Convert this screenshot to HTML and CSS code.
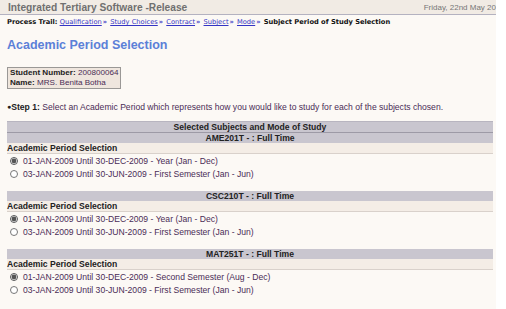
FILE: index.html
```html
<!DOCTYPE html>
<html lang="en">
<head>
  <meta charset="UTF-8" />
  <title>Academic Period Selection | ITS</title>
  <link rel="stylesheet" href="styles.css">
</head>
<body>
  <div class="page">
    <div class="topbar">
      <span class="app-name">Integrated Tertiary Software -Release</span>
      <span class="date">Friday, 22nd May 20</span>
    </div>

    <div class="content">
      <div class="trail">
        <b>Process Trail:</b>
        <a href="#">Qualification</a><span class="sep">&raquo;</span>
        <a href="#">Study Choices</a><span class="sep">&raquo;</span>
        <a href="#">Contract</a><span class="sep">&raquo;</span>
        <a href="#">Subject</a><span class="sep">&raquo;</span>
        <a href="#">Mode</a><span class="sep">&raquo;</span>
        <b>Subject Period of Study Selection</b>
      </div>

      <h1>Academic Period Selection</h1>

      <div class="student">
        <div><b>Student Number:</b> 200800064</div>
        <div><b>Name:</b> MRS. Benita Botha</div>
      </div>

      <p class="step"><span class="dot">&#9679;</span><b>Step 1:</b> Select an Academic Period which represents how you would like to study for each of the subjects chosen.</p>

      <div class="subjects">
        <div class="head-bar">Selected Subjects and Mode of Study</div>

        <div class="subject">
          <div class="subject-bar">AME201T - : Full Time</div>
          <div class="period-label">Academic Period Selection</div>
          <label class="option"><input type="radio" name="ame" checked> 01-JAN-2009 Until 30-DEC-2009 - Year (Jan - Dec)</label>
          <label class="option"><input type="radio" name="ame"> 03-JAN-2009 Until 30-JUN-2009 - First Semester (Jan - Jun)</label>
        </div>

        <div class="subject">
          <div class="subject-bar">CSC210T - : Full Time</div>
          <div class="period-label">Academic Period Selection</div>
          <label class="option"><input type="radio" name="csc" checked> 01-JAN-2009 Until 30-DEC-2009 - Year (Jan - Dec)</label>
          <label class="option"><input type="radio" name="csc"> 03-JAN-2009 Until 30-JUN-2009 - First Semester (Jan - Jun)</label>
        </div>

        <div class="subject">
          <div class="subject-bar">MAT251T - : Full Time</div>
          <div class="period-label">Academic Period Selection</div>
          <label class="option"><input type="radio" name="mat" checked> 01-JAN-2009 Until 30-DEC-2009 - Second Semester (Aug - Dec)</label>
          <label class="option"><input type="radio" name="mat"> 03-JAN-2009 Until 30-JUN-2009 - First Semester (Jan - Jun)</label>
        </div>
      </div>
    </div>
  </div>
</body>
</html>
```

FILE: styles.css
```css
* {
  box-sizing: border-box;
  margin: 0;
  padding: 0;
}

html, body {
  height: 100%;
  background: #ffffff;
  font-family: 'Liberation Sans', Arial, sans-serif;
  overflow: hidden;
}

.page {
  width: 496px;
  height: 100%;
  background: #fcf9f5;
  overflow: hidden;
}

.topbar {
  display: flex;
  align-items: center;
  height: 15px;
  padding-left: 8px;
  background: #f1ebe4;
  border-bottom: 1px solid #b4b2c0;
}

.app-name {
  font-size: 10.2px;
  font-weight: bold;
  color: #707070;
  white-space: nowrap;
}

.date {
  margin-left: auto;
  white-space: nowrap;
  font-size: 8px;
  color: #777;
}

.content {
  padding: 0 3px 0 7px;
}

.trail {
  margin-top: 3px;
  font-family: 'DejaVu Sans', Verdana, sans-serif;
  font-size: 6.7px;
  line-height: 9px;
  color: #111;
  white-space: nowrap;
}

.trail a {
  color: #3434c4;
}

.trail .sep {
  color: #3434c4;
  font-weight: bold;
  margin: 0 1px;
}

h1 {
  margin-top: 11px;
  font-size: 12.5px;
  line-height: 15px;
  color: #5b80d8;
}

.student {
  display: inline-block;
  margin-top: 14px;
  padding: 0 2px;
  background: #efe6de;
  border: 1px solid #9a9896;
  font-size: 8.1px;
  line-height: 10px;
  color: #4a2c55;
  white-space: nowrap;
}

.student b {
  color: #222;
}

.step {
  margin-top: 12px;
  font-size: 8.6px;
  line-height: 11px;
  color: #4a2c55;
  white-space: nowrap;
}

.step .dot {
  font-size: 7px;
  color: #222;
  vertical-align: 1px;
}

.step b {
  color: #222;
}

.subjects {
  margin-top: 8px;
  width: 486px;
  font-size: 8.6px;
  color: #4a2c55;
}

.head-bar,
.subject-bar {
  height: 10px;
  line-height: 10px;
  text-align: center;
  font-weight: bold;
  color: #222;
  background: #c9c6cf;
}

.head-bar {
  border-top: 1px solid #b8b5c0;
  height: 12px;
  line-height: 11px;
  border-bottom: 1px solid #9d9aa6;
}

.subject {
  display: flex;
  flex-direction: column;
  padding-bottom: 11px;
}

.period-label {
  height: 11px;
  line-height: 10px;
  font-weight: bold;
  color: #222;
  background: #f4ede6;
  border-bottom: 1px solid #d9d1cb;
}

.option {
  display: flex;
  align-items: center;
  height: 13px;
  padding-left: 3px;
  white-space: nowrap;
}

.option input {
  width: 8px;
  height: 8px;
  margin: 0 5px 0 0;
  accent-color: #555;
}
```
